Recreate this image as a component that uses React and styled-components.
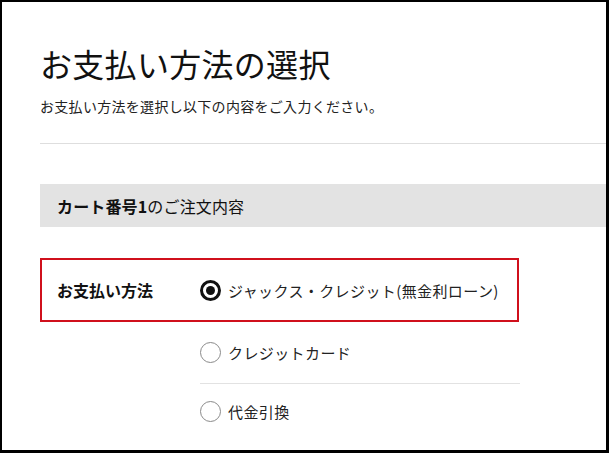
import React from "react";
import styled, { createGlobalStyle } from "styled-components";

const GlobalStyle = createGlobalStyle`
	html, body {
		margin: 0;
		padding: 0;
		background: #ffffff;
	}
	body {
		font-family: "Noto Sans CJK JP", "Noto Sans", sans-serif;
		color: #111;
	}
`;

const Frame = styled.div`
	box-sizing: border-box;
	width: 609px;
	height: 453px;
	border-style: solid;
	border-color: #000;
	border-width: 2px 3px 3px 2px;
	background: #fff;
	overflow: hidden;
	padding: 41px 0 0 38px;
`;

const Title = styled.h1`
	margin: 0;
	font-size: 32px;
	line-height: 40px;
	font-weight: 400;
	letter-spacing: 0.3px;
	color: #111;
`;

const Lead = styled.p`
	margin: 13px 0 0;
	font-size: 14px;
	line-height: 20px;
	letter-spacing: 0.3px;
	color: #222;
`;

const Rule = styled.div`
	margin-top: 27px;
	border-top: 1px solid #dedede;
`;

const CartBar = styled.div`
	display: flex;
	align-items: center;
	box-sizing: border-box;
	height: 43px;
	margin-top: 40px;
	padding-left: 17px;
	background: #e3e3e3;
	font-size: 16px;
	letter-spacing: 0.15px;
	color: #111;

	b {
		font-weight: 700;
	}
`;

const MethodBox = styled.div`
	display: flex;
	align-items: center;
	box-sizing: border-box;
	width: 479px;
	height: 64px;
	margin-top: 31px;
	border: 2px solid #d0101c;
`;

const MethodLabel = styled.div`
	box-sizing: border-box;
	width: 158px;
	padding-left: 15px;
	font-size: 16px;
	font-weight: 700;
	color: #111;
`;

const OptionList = styled.div`
	width: 320px;
	margin-left: 160px;
`;

const Option = styled.label`
	display: flex;
	align-items: center;
	gap: 7px;
	height: ${(p) => p.$height || 54}px;
	font-size: 15px;
	letter-spacing: 0.4px;
	color: #222;
	border-bottom: ${(p) => (p.$divided ? "1px solid #e2e2e2" : "none")};
	cursor: pointer;
`;

const Radio = styled.span`
	position: relative;
	box-sizing: border-box;
	flex: none;
	width: 21px;
	height: 21px;
	border-radius: 50%;
	border: ${(p) => (p.$checked ? "3px solid #111" : "1px solid #8a8a8a")};
	background: #fff;

	&::after {
		content: "";
		display: ${(p) => (p.$checked ? "block" : "none")};
		position: absolute;
		left: 50%;
		top: 50%;
		width: 9px;
		height: 9px;
		margin: -4.5px 0 0 -4.5px;
		border-radius: 50%;
		background: #111;
	}
`;

function RadioOption({ checked, children, height, divided }) {
	return (
		<Option $height={height} $divided={divided}>
			<Radio $checked={checked} />
			<span>{children}</span>
		</Option>
	);
}

export default function App() {
	return (
		<>
			<GlobalStyle />
			<Frame>
				<Title>お支払い方法の選択</Title>
				<Lead>お支払い方法を選択し以下の内容をご入力ください。</Lead>
				<Rule />

				<CartBar>
					<b>カート番号1</b>のご注文内容
				</CartBar>

				<MethodBox>
					<MethodLabel>お支払い方法</MethodLabel>
					<RadioOption checked height={60}>
						ジャックス・クレジット(無金利ローン)
					</RadioOption>
				</MethodBox>

				<OptionList>
					<RadioOption height={61} divided>
						クレジットカード
					</RadioOption>
					<RadioOption height={54}>代金引換</RadioOption>
				</OptionList>
			</Frame>
		</>
	);
}
